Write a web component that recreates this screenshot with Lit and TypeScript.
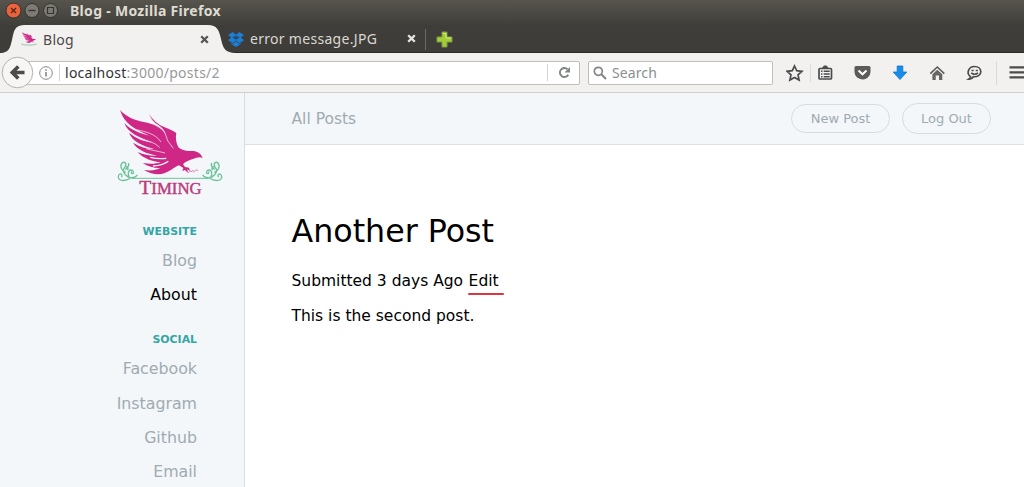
import { LitElement, html, css, svg } from "lit";
import { customElement } from "lit/decorators.js";

const bird = svg`
  <path fill="#cf2785" d="M45 36 C64 57 88 66 116 72 C146 78 169 87 181 108 C178 96 170 86 156 79 C143 70 136 61 133 49
    C147 72 165 84 190 92 Q204 97 214 105 C211 119 213 134 220 148 C231 157 244 160 257 159
    C272 157 288 164 293 180 C283 175 274 180 263 183 C252 187 240 191 234 199 L240 207 L252 209 L255 219 L247 214 L249 225 L240 216 L232 219 L235 210
    L222 202 C207 208 197 219 178 226 C159 232 140 229 117 216 C139 219 153 216 166 210
    C150 211 129 206 113 195 C135 199 152 198 167 193 C143 190 116 183 98 162
    C118 171 138 174 156 173 C124 166 98 157 84 134 C104 147 126 153 148 153
    C111 143 83 131 72 104 C93 122 120 131 142 134 C101 117 68 105 58 75 C80 98 106 106 133 113 C91 94 57 78 45 36Z"/>
  <path fill="none" stroke="#f5d5e6" stroke-width="2.500" d="M133 49 C142 80 169 83 179 103 Q186 133 205 151 M95 95 C124 102 151 107 168 132 M105 123 C130 128 150 134 164 148 M123 152 C141 157 157 159 180 165"/>
  <path fill="none" stroke="#f4f7f9" stroke-width="4" d="M136 178 Q158 184 184 181 M144 204 Q172 203 190 190"/>`;

const scroll = svg`<path d="M87 241 C66 240 51 226 57 211 C63 199 75 211 66 216 M77 240 C59 252 38 249 40 235 C43 222 56 230 49 237
  M73 237 C65 222 75 210 84 219 C90 230 75 228 80 221 M62 224 C51 219 43 206 51 195 C58 189 67 198 60 205 M79 239 Q94 238 97 230 M61 214 Q75 204 70 195"/>`;

@customElement("app-root")
export class AppRoot extends LitElement {
  static styles = css`
    :host { display: flex; flex-direction: column; width: 1024px; height: 487px; overflow: hidden; background: #fff;
      font-family: "DejaVu Sans", Verdana, sans-serif; font-size: 15.5px; color: #000; }
    * { box-sizing: border-box; }
    svg { display: block; flex: none; }
    .titlebar { flex: none; height: 25px; display: flex; align-items: center; padding: 0 0 4px 5px;
      background: linear-gradient(#56544d, #403f3a); color: #dfdbd2;
      font: bold 14px/21px "Noto Sans", "Open Sans", sans-serif; }
    .titlebar span { margin-left: 8px; white-space: nowrap; letter-spacing: 0.3px; }
    .tabs { flex: none; height: 28px; display: flex; background: #3e3d39; border-bottom: 1px solid #2c2b28;
      font: 14px/27px "Noto Sans", "Open Sans", sans-serif; color: #dbd8d1; }
    .tab { display: flex; align-items: center; white-space: nowrap; }
    .active { width: 228px; height: 28px; padding-left: 21px; color: #4a4a48; position: relative; }
    .shape { position: absolute; left: 0; top: 0; }
    .active > .label, .active > .fav, .active > .close { position: relative; }
    .label { margin-left: 6px; width: 157px; letter-spacing: 0.3px; }
    .divider { width: 1px; height: 21px; margin: 4px 10px 0 9px; background: #6b6963; }
    .plus { margin-top: 6px; }
    .toolbar { flex: none; height: 40px; display: flex; align-items: center; background: #f2f1f0; border-bottom: 1px solid #d3cfca;
      font: 14px/22px "Noto Sans", "Open Sans", sans-serif; }
    .back { margin-left: 1px; z-index: 1; }
    .url { width: 554px; height: 24px; margin-left: -8px; padding-left: 12px; display: flex; align-items: center;
      background: #fff; border: 1px solid #c1beb9; border-radius: 0 2px 2px 0; color: #999; white-space: nowrap; }
    .url b { font-weight: 400; color: #333; }
    .url .addr { width: 482px; margin-left: 5px; letter-spacing: 0.27px; padding-top: 1px; }
    .vline { width: 1px; height: 17px; background: #d4d4d4; margin-left: 6px; }
    .vline.end { margin-left: 0; }
    .reload { margin-left: 10px; }
    .search { width: 185px; height: 24px; margin-left: 8px; padding-left: 4px; display: flex; align-items: center;
      border: 1px solid #c1beb9; border-radius: 2px; background: #fff; color: #8b8f90; }
    .search span { margin-left: 5px; letter-spacing: 0.1px; padding-top: 1px; }
    .tools { margin-left: 13px; }
    .page { flex: 1; display: flex; min-height: 0; }
    .side { width: 245px; flex: none; background: #f4f7f9; border-right: 1px solid #d9dde1; padding-right: 47px;
      display: flex; flex-direction: column; align-items: flex-end; color: #9eabb3; font-size: 15.8px; }
    .logo { margin: 5px -38px 0 0; }
    .side h2 { margin: 0; font-size: 10.9px; line-height: 14px; height: 14px; flex: none; font-weight: bold; color: #35a5a5; }
    .side .web { margin-top: 17px; margin-bottom: 12px; }
    .side .soc { margin-top: 24px; margin-bottom: 12px; }
    .side a { height: 34.3px; line-height: 20px; white-space: nowrap; flex: none; }
    .side .on { color: #000; height: 24px; }
    .main { flex: 1; }
    .head { height: 52px; display: flex; align-items: center; padding: 0 33px 0 46.5px; background: #f4f7f9;
      border-bottom: 1px solid #dde1e5; color: #9eabb3; }
    .head .all { flex: 1; }
    .pill { border: 1px solid #d6dce0; border-radius: 16px; width: 99px; height: 29px; line-height: 27px; text-align: center; font-size: 13px; }
    .out { width: 89px; height: 31px; line-height: 29px; margin-left: 12px; }
    .post { padding: 66px 0 0 46.5px; }
    .post h1 { margin: 0; font-weight: 400; font-size: 31.7px; line-height: 40px; }
    .post p { margin: 0; line-height: 20px; white-space: nowrap; }
    .meta { display: flex; padding-top: 20px; }
    .edit { position: relative; margin-left: 5.5px; }
    .mark { position: absolute; left: -1px; top: 22px; width: 36px; height: 2px; background: #d8373f; border-radius: 1px; }
    .post .body { padding-top: 15px; }
  `;

  private close(color: string) {
    return html`<svg class="close" width="9" height="9" viewBox="0 0 9 9"><path d="M1.2 1.2 7.8 7.8M7.8 1.2 1.2 7.8" stroke=${color} stroke-width="2.3"/></svg>`;
  }

  render() {
    return html`
      <div class="titlebar">
        <svg width="57" height="18" viewBox="0 0 57 18">
          <circle cx="8.5" cy="8.5" r="7.5" fill="#e9633c" stroke="#35332f"/>
          <path d="m6 6 5 5m0-5-5 5" stroke="#5a2819" stroke-width="1.4"/>
          <circle cx="27" cy="8.5" r="7" fill="#7c7a73" stroke="#35332f"/>
          <path d="M23.5 8.5h7" stroke="#35332f" stroke-width="1.4"/>
          <circle cx="45.5" cy="8.5" r="7" fill="#7c7a73" stroke="#35332f"/>
          <path d="M42.5 5.5h6v6h-6z" fill="none" stroke="#35332f" stroke-width="1.2"/>
        </svg>
        <span>Blog - Mozilla Firefox</span>
      </div>
      <div class="tabs">
        <div class="tab active">
          <svg class="shape" width="236" height="28" viewBox="0 0 236 28"><path fill="#f2f1f0" d="M0 28C9 28 10 23 12 15 14 5 15 0 25 0H208C217 0 219 5 221 14 223 23 225 28 236 28Z"/></svg>
          <svg class="fav" width="16" height="16" viewBox="30 20 280 280">${bird}<path d="M35 250Q160 285 305 250" fill="none" stroke="#a9cfbd" stroke-width="20"/></svg>
          <span class="label">Blog</span>${this.close("#555")}
        </div>
        <div class="tab second">
          <svg width="16" height="16" viewBox="0 0 16 16"><path fill="#1c7fd6" d="m4.7 1 3.3 2.7L11.3 1 16 4.1 12.8 6.6 16 9.2l-4.7 3L8 9.500 4.700 12.200 0 9.200l3.200-2.600L0 4.100zM8 10.200l3.300 2.700 1.500-.9v1L8 16l-4.800-3v-1l1.500.9z"/><path fill="#2b4a66" d="m8 4.400 3.700 2.200L8 8.800 4.300 6.600z"/></svg>
          <span class="label">error message.JPG</span>${this.close("#e8e6e1")}
        </div>
        <div class="divider"></div>
        <svg class="plus" width="17" height="17" viewBox="0 0 17 17"><path d="M6 1h5v5h5v5h-5v5H6v-5H1V6h5z" fill="#a2cc3a" stroke="#7d9c3c"/><path d="M7 2.500h3V7h5" fill="none" stroke="#d1ec80"/></svg>
      </div>
      <div class="toolbar">
        <svg class="back" width="33" height="33" viewBox="0 0 33 33"><circle cx="16.500" cy="16.500" r="15.300" fill="#f7f6f5" stroke="#b5b2ad"/><path d="M23.500 16.500H13M17.300 10.500l-6 6 6 6" fill="none" stroke="#4b4b4b" stroke-width="3.600"/></svg>
        <div class="url">
          <svg width="14" height="14" viewBox="0 0 14 14"><circle cx="7" cy="7" r="6.300" fill="none" stroke="#888"/><path d="M7 6v4.500M7 3.300v1.500" stroke="#777" stroke-width="1.400"/></svg>
          <div class="vline"></div>
          <span class="addr"><b>localhost</b>:3000/posts/2</span>
          <div class="vline end"></div>
          <svg class="reload" width="13" height="13" viewBox="0 0 13 13"><path d="M10.300 8.800A4.500 4.500 0 1 1 9.500 3.300" fill="none" stroke="#7d8388" stroke-width="1.900"/><path d="M12 1v5.500H6.500z" fill="#7d8388"/></svg>
        </div>
        <div class="search">
          <svg width="14" height="14" viewBox="0 0 14 14"><circle cx="5.300" cy="5.300" r="4" fill="none" stroke="#858585" stroke-width="1.700"/><path d="m8.300 8.300 4.700 4.700" stroke="#858585" stroke-width="2"/></svg>
          <span>Search</span>
        </div>
        <svg class="tools" width="238" height="24" viewBox="786 61 238 24" fill="none" stroke="#4c4c4c" stroke-width="1.700">
          <path d="m794.500 66 2.200 4.700 5.200.6-3.900 3.500 1.100 5.200-4.600-2.600-4.600 2.600 1.100-5.200-3.900-3.500 5.200-.6z"/>
          <path d="M810.500 64v18M996.500 57v32" stroke="#dddad6" stroke-width="1"/>
          <rect x="819" y="68.500" width="12.500" height="10.500" rx="1"/><path fill="#4c4c4c" stroke="none" d="M821.500 68.500 824 65.500h2.500l2.500 3z"/><path stroke-width="1.500" d="M821 71.300h1.500m1.200 0h6M821 74h1.500m1.200 0h6M821 76.700h1.500m1.200 0h6"/>
          <path fill="#5b5b5b" stroke="none" d="M856 66h13q1.500 0 1.500 1.500V72q0 3-2.500 5.300t-5.500 2.200-5.500-2.200-2.500-5.300v-4.500q0-1.500 1.500-1.500z"/><path stroke="#fff" stroke-width="2" d="m858.500 70.500 4 3.800 4-3.800"/>
          <path fill="#178ce8" stroke="#0c73cb" stroke-width=".8" d="M897.200 66h5.600v6h4l-6.800 7.500-6.800-7.500h4z"/>
          <path d="m930.300 73.700 7-6.700 7 6.700" stroke="#5c5c5c" stroke-width="1.600"/><path fill="#666" stroke="none" d="m937.300 69.800 5 4.500v5.700h-3.300v-4.500h-3.300V80h-3.300v-5.700z"/>
          <path stroke-width="1.700" d="M970.600 76.600c-4.800-3.300-2-10.100 3.900-10.100 4.200 0 6.300 2.500 6.300 5.200 0 3.500-3.300 5.300-7.400 5-1 1.600-2.600 2.600-4.500 2.400q1.700-.9 1.700-2.500z"/><path d="M971.500 70.500h2.200m2 0h2.200M971.200 73q3.400 2.500 6.800 0" stroke-width="1.600"/>
          <path d="M1009.500 67.300H1026M1009.500 72.300H1026M1009.500 77.300H1026" stroke-width="2.300"/>
        </svg>
      </div>
      <div class="page">
        <div class="side">
          <svg class="logo" width="130" height="110" viewBox="0 0 390 330">
            ${bird}
            <g fill="none" stroke="#6bc39a" stroke-width="4">${scroll}<g transform="translate(390 0) scale(-1 1)">${scroll}</g><path d="M82 241H310" stroke-width="3"/></g>
            <path d="M249 225q8-12 9-3 7-10 7 0 8-9 15-5" fill="none" stroke="#df8ab7" stroke-width="3"/>
            <text x="103" y="287" font-family="Liberation Serif, serif" fill="#b93c7e" stroke="#b93c7e" stroke-width="1.200" font-size="55" textLength="187" lengthAdjust="spacingAndGlyphs">T<tspan font-size="47">IMING</tspan></text>
          </svg>
          <h2 class="web">WEBSITE</h2>
          <a>Blog</a><a class="on">About</a>
          <h2 class="soc">SOCIAL</h2>
          <a>Facebook</a><a>Instagram</a><a>Github</a><a>Email</a>
        </div>
        <div class="main">
          <div class="head"><span class="all">All Posts</span><div class="pill">New Post</div><div class="pill out">Log Out</div></div>
          <div class="post">
            <h1>Another Post</h1>
            <p class="meta">Submitted 3 days Ago <span class="edit">Edit<i class="mark"></i></span></p>
            <p class="body">This is the second post.</p>
          </div>
        </div>
      </div>`;
  }
}
